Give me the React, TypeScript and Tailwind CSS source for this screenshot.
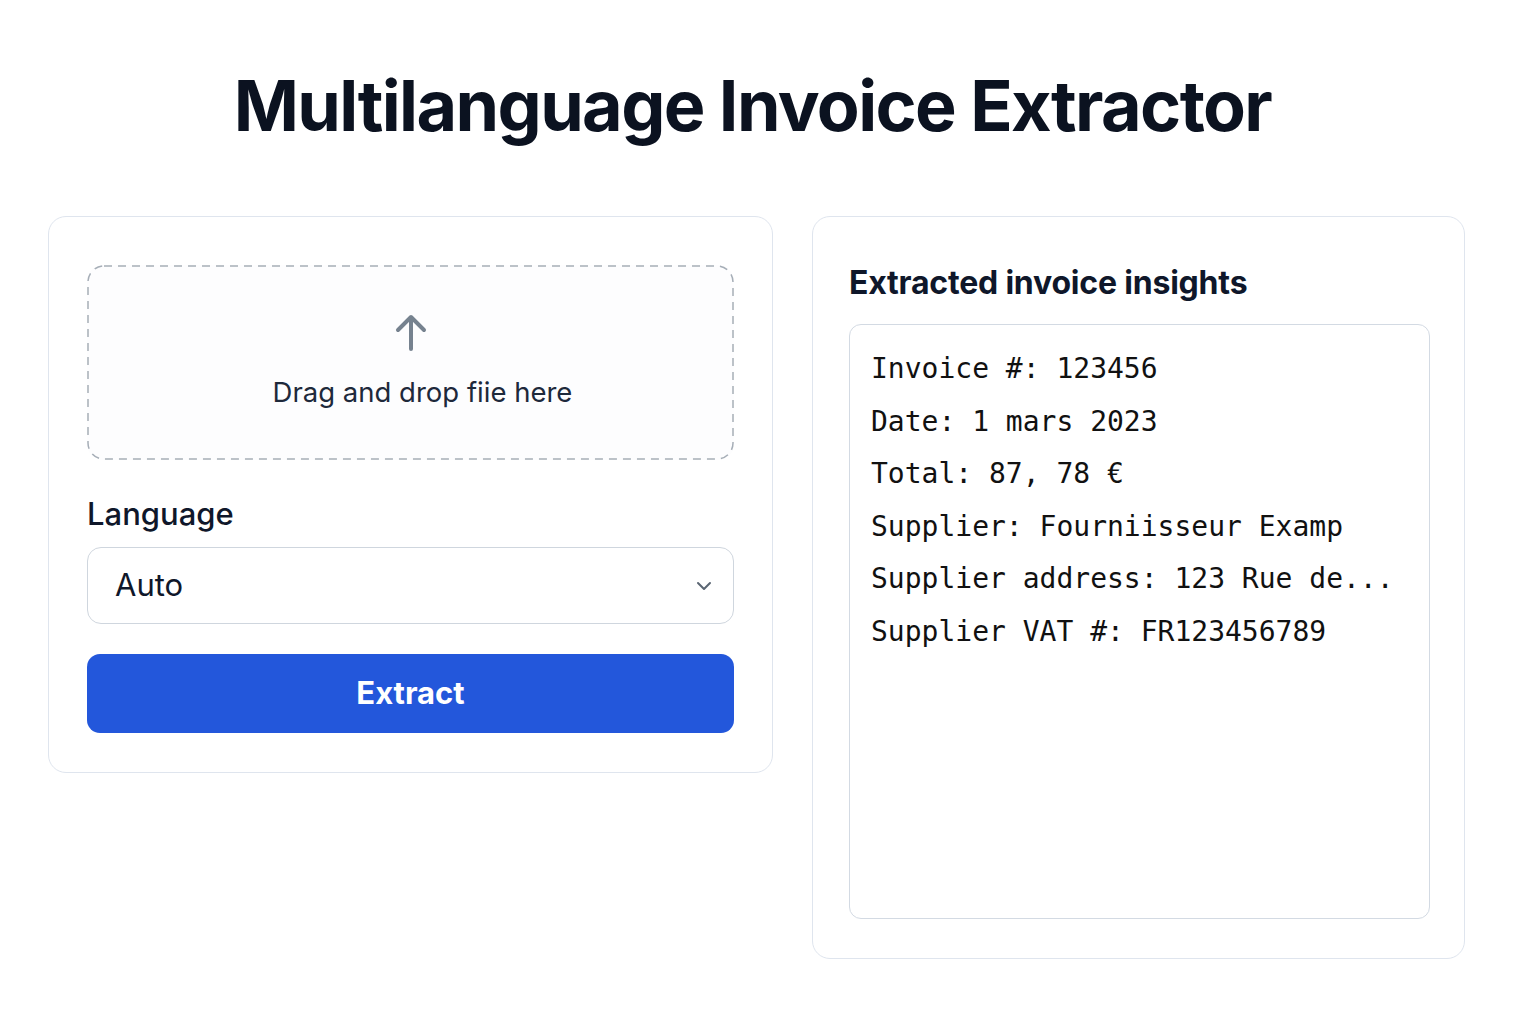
import { ChevronDown } from 'lucide-react';

const lines = [
  'Invoice #: 123456',
  'Date: 1 mars 2023',
  'Total: 87, 78 €',
  'Supplier: Fourniisseur Examp',
  'Supplier address: 123 Rue de...',
  'Supplier VAT #: FR123456789',
];

export default function App() {
  return (
    <div className="min-h-screen bg-white font-['Inter',sans-serif] text-[#0f172a]">
      <div className="ml-[48px] w-[1417px] pt-[66px]">
        <h1 className="pr-[8px] text-center text-[70px] font-bold leading-[80px] tracking-[-1.6px] text-[#0b1220]">
          Multilanguage Invoice Extractor
        </h1>

        <div className="mt-[70px] flex items-start gap-[39px]">
          {/* upload card */}
          <div className="w-[725px] rounded-[18px] border border-[#dfe5ee] px-[38px] pt-[48px] pb-[39px]">
            <div className="relative flex h-[195px] flex-col items-center justify-center rounded-[16px] bg-[#fdfdfe]">
              <svg className="absolute inset-0 h-full w-full" fill="none">
                <rect x="1" y="1" width="645" height="193" rx="16" stroke="#a6aeb7" strokeWidth="1.5" strokeDasharray="8 6" />
              </svg>
              <svg width="36" height="38" viewBox="0 0 36 38" fill="none" className="-mt-[2px] text-[#76828f]">
                <path d="M18 35V4M5 16L18 3l13 13" stroke="currentColor" strokeWidth="4" strokeLinecap="round" strokeLinejoin="round" />
              </svg>
              <p className="mt-[22px] ml-[24px] text-[27.5px] leading-[36px] text-[#1e293b]">Drag and drop fiie here</p>
            </div>

            <label className="mt-[34px] block text-[31px] font-medium leading-[40px] text-[#0f172a]">Language</label>
            <div className="mt-[13px] flex h-[77px] items-center justify-between rounded-[14px] border border-[#cfd6de] pl-[27px] pr-[17px]">
              <span className="text-[31px] text-[#0f172a]">Auto</span>
              <ChevronDown className="h-[24px] w-[24px] text-[#5b6673]" strokeWidth={2} />
            </div>

            <button className="mt-[30px] flex h-[79px] w-full items-center justify-center rounded-[13px] bg-[#2357db] text-[31px] font-bold text-white">
              Extract
            </button>
          </div>

          {/* results card */}
          <div className="w-[653px] rounded-[18px] border border-[#dfe5ee] pl-[36px] pr-[34px] pt-[46px] pb-[39px]">
            <h2 className="text-[32px] font-bold leading-[40px] tracking-[-0.2px] text-[#0f172a]">Extracted invoice insights</h2>
            <div className="mt-[21px] h-[595px] rounded-[12px] border border-[#d3dae3] px-[21px] pt-[18px]">
              {lines.map((line) => (
                <p key={line} className="whitespace-pre font-['DejaVu_Sans_Mono',monospace] text-[28px] leading-[52.5px] text-[#111]">
                  {line}
                </p>
              ))}
            </div>
          </div>
        </div>
      </div>
    </div>
  );
}
